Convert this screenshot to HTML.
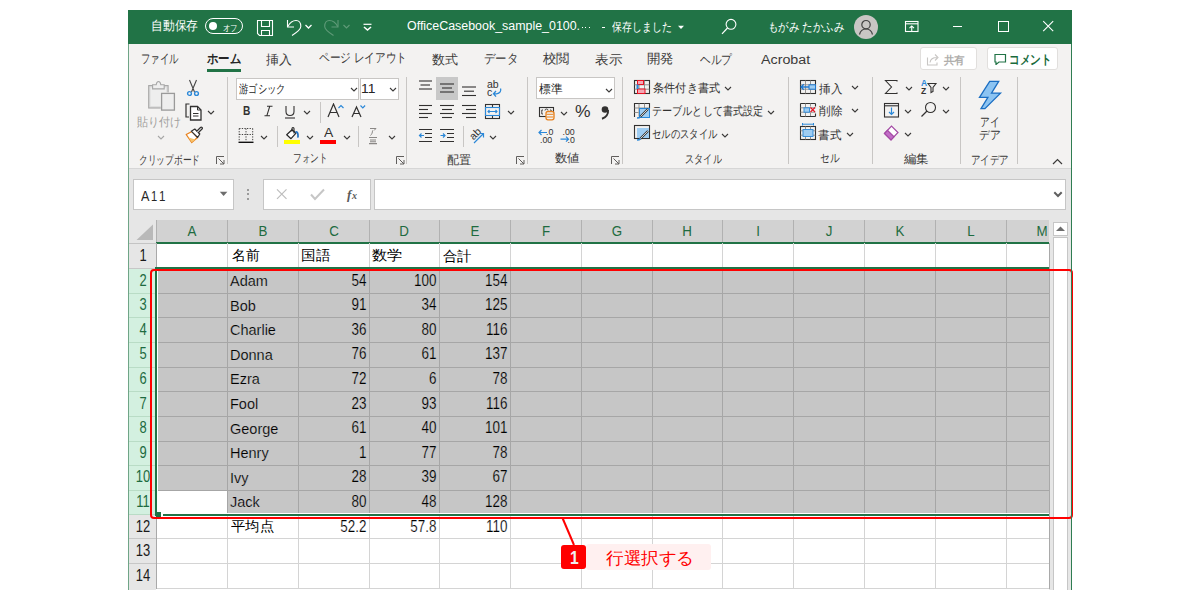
<!DOCTYPE html><html><head><meta charset="utf-8"><style>
html,body{margin:0;padding:0;background:#fff;width:1200px;height:600px;overflow:hidden;}
body{font-family:"Liberation Sans", sans-serif;position:relative;}
div,svg{box-sizing:border-box;}
</style></head><body>
<div style="position:absolute;left:128px;top:10px;width:944px;height:34px;background:#217346;"></div>
<div style="position:absolute;left:128px;top:44px;width:944px;height:124px;background:#f3f2f1;"></div>
<div style="position:absolute;left:128px;top:168px;width:944px;height:1px;background:#d6d6d6;"></div>
<div style="position:absolute;left:128px;top:169px;width:944px;height:51px;background:#e6e6e6;"></div>
<div style="position:absolute;left:128px;top:220px;width:944px;height:370px;background:#fff;"></div>
<div style="position:absolute;left:156px;top:220px;width:893px;height:22px;background:#d2d2d2;"></div>
<div style="position:absolute;left:129px;top:220px;width:27px;height:23px;background:#e6e6e6;"></div>
<svg style="position:absolute;left:136px;top:224px;" width="18" height="16" viewBox="0 0 18 16"><path d="M17 0.5V16H0.5z" fill="#b9b9b9"/></svg>
<div style="position:absolute;left:156px;top:220px;width:1px;height:22px;background:#b1b1b1;"></div>
<div style="position:absolute;left:227px;top:220px;width:1px;height:22px;background:#b1b1b1;"></div>
<div style="position:absolute;left:298px;top:220px;width:1px;height:22px;background:#b1b1b1;"></div>
<div style="position:absolute;left:369px;top:220px;width:1px;height:22px;background:#b1b1b1;"></div>
<div style="position:absolute;left:439px;top:220px;width:1px;height:22px;background:#b1b1b1;"></div>
<div style="position:absolute;left:510px;top:220px;width:1px;height:22px;background:#b1b1b1;"></div>
<div style="position:absolute;left:581px;top:220px;width:1px;height:22px;background:#b1b1b1;"></div>
<div style="position:absolute;left:652px;top:220px;width:1px;height:22px;background:#b1b1b1;"></div>
<div style="position:absolute;left:722px;top:220px;width:1px;height:22px;background:#b1b1b1;"></div>
<div style="position:absolute;left:793px;top:220px;width:1px;height:22px;background:#b1b1b1;"></div>
<div style="position:absolute;left:864px;top:220px;width:1px;height:22px;background:#b1b1b1;"></div>
<div style="position:absolute;left:935px;top:220px;width:1px;height:22px;background:#b1b1b1;"></div>
<div style="position:absolute;left:1006px;top:220px;width:1px;height:22px;background:#b1b1b1;"></div>
<div style="position:absolute;left:161.5px;top:223.08px;width:60px;text-align:center;font-size:15.5px;line-height:1;color:#1e6b40;transform:scaleX(0.86);">A</div>
<div style="position:absolute;left:232.5px;top:223.08px;width:60px;text-align:center;font-size:15.5px;line-height:1;color:#1e6b40;transform:scaleX(0.86);">B</div>
<div style="position:absolute;left:303.5px;top:223.08px;width:60px;text-align:center;font-size:15.5px;line-height:1;color:#1e6b40;transform:scaleX(0.86);">C</div>
<div style="position:absolute;left:374.0px;top:223.08px;width:60px;text-align:center;font-size:15.5px;line-height:1;color:#1e6b40;transform:scaleX(0.86);">D</div>
<div style="position:absolute;left:444.5px;top:223.08px;width:60px;text-align:center;font-size:15.5px;line-height:1;color:#1e6b40;transform:scaleX(0.86);">E</div>
<div style="position:absolute;left:515.5px;top:223.08px;width:60px;text-align:center;font-size:15.5px;line-height:1;color:#1e6b40;transform:scaleX(0.86);">F</div>
<div style="position:absolute;left:586.5px;top:223.08px;width:60px;text-align:center;font-size:15.5px;line-height:1;color:#1e6b40;transform:scaleX(0.86);">G</div>
<div style="position:absolute;left:657.0px;top:223.08px;width:60px;text-align:center;font-size:15.5px;line-height:1;color:#1e6b40;transform:scaleX(0.86);">H</div>
<div style="position:absolute;left:727.5px;top:223.08px;width:60px;text-align:center;font-size:15.5px;line-height:1;color:#1e6b40;transform:scaleX(0.86);">I</div>
<div style="position:absolute;left:798.5px;top:223.08px;width:60px;text-align:center;font-size:15.5px;line-height:1;color:#1e6b40;transform:scaleX(0.86);">J</div>
<div style="position:absolute;left:869.5px;top:223.08px;width:60px;text-align:center;font-size:15.5px;line-height:1;color:#1e6b40;transform:scaleX(0.86);">K</div>
<div style="position:absolute;left:940.5px;top:223.08px;width:60px;text-align:center;font-size:15.5px;line-height:1;color:#1e6b40;transform:scaleX(0.86);">L</div>
<div style="position:absolute;left:1012px;top:223.08px;width:60px;text-align:center;font-size:15.5px;line-height:1;color:#1e6b40;transform:scaleX(0.86);">M</div>
<div style="position:absolute;left:156px;top:242px;width:893px;height:2px;background:#217346;"></div>
<div style="position:absolute;left:129px;top:243px;width:27px;height:26px;background:#e6e6e6;"></div>
<div style="position:absolute;left:129px;top:268px;width:27px;height:1px;background:#c7c7c7;"></div>
<div style="position:absolute;left:112.5px;top:248.06px;width:60px;text-align:center;font-size:16px;line-height:1;color:#1a1a1a;transform:scaleX(0.81);">1</div>
<div style="position:absolute;left:129px;top:269px;width:27px;height:25px;background:#d3f0e0;"></div>
<div style="position:absolute;left:129px;top:293px;width:27px;height:1px;background:#b9dcc6;"></div>
<div style="position:absolute;left:112.5px;top:272.66px;width:60px;text-align:center;font-size:16px;line-height:1;color:#1e6b40;transform:scaleX(0.81);">2</div>
<div style="position:absolute;left:129px;top:294px;width:27px;height:24px;background:#d3f0e0;"></div>
<div style="position:absolute;left:129px;top:317px;width:27px;height:1px;background:#b9dcc6;"></div>
<div style="position:absolute;left:112.5px;top:297.26px;width:60px;text-align:center;font-size:16px;line-height:1;color:#1e6b40;transform:scaleX(0.81);">3</div>
<div style="position:absolute;left:129px;top:318px;width:27px;height:25px;background:#d3f0e0;"></div>
<div style="position:absolute;left:129px;top:342px;width:27px;height:1px;background:#b9dcc6;"></div>
<div style="position:absolute;left:112.5px;top:321.86px;width:60px;text-align:center;font-size:16px;line-height:1;color:#1e6b40;transform:scaleX(0.81);">4</div>
<div style="position:absolute;left:129px;top:343px;width:27px;height:25px;background:#d3f0e0;"></div>
<div style="position:absolute;left:129px;top:367px;width:27px;height:1px;background:#b9dcc6;"></div>
<div style="position:absolute;left:112.5px;top:346.46px;width:60px;text-align:center;font-size:16px;line-height:1;color:#1e6b40;transform:scaleX(0.81);">5</div>
<div style="position:absolute;left:129px;top:368px;width:27px;height:24px;background:#d3f0e0;"></div>
<div style="position:absolute;left:129px;top:391px;width:27px;height:1px;background:#b9dcc6;"></div>
<div style="position:absolute;left:112.5px;top:371.06px;width:60px;text-align:center;font-size:16px;line-height:1;color:#1e6b40;transform:scaleX(0.81);">6</div>
<div style="position:absolute;left:129px;top:392px;width:27px;height:25px;background:#d3f0e0;"></div>
<div style="position:absolute;left:129px;top:416px;width:27px;height:1px;background:#b9dcc6;"></div>
<div style="position:absolute;left:112.5px;top:395.66px;width:60px;text-align:center;font-size:16px;line-height:1;color:#1e6b40;transform:scaleX(0.81);">7</div>
<div style="position:absolute;left:129px;top:417px;width:27px;height:25px;background:#d3f0e0;"></div>
<div style="position:absolute;left:129px;top:441px;width:27px;height:1px;background:#b9dcc6;"></div>
<div style="position:absolute;left:112.5px;top:420.26px;width:60px;text-align:center;font-size:16px;line-height:1;color:#1e6b40;transform:scaleX(0.81);">8</div>
<div style="position:absolute;left:129px;top:442px;width:27px;height:24px;background:#d3f0e0;"></div>
<div style="position:absolute;left:129px;top:465px;width:27px;height:1px;background:#b9dcc6;"></div>
<div style="position:absolute;left:112.5px;top:444.86px;width:60px;text-align:center;font-size:16px;line-height:1;color:#1e6b40;transform:scaleX(0.81);">9</div>
<div style="position:absolute;left:129px;top:466px;width:27px;height:25px;background:#d3f0e0;"></div>
<div style="position:absolute;left:129px;top:490px;width:27px;height:1px;background:#b9dcc6;"></div>
<div style="position:absolute;left:112.5px;top:469.46px;width:60px;text-align:center;font-size:16px;line-height:1;color:#1e6b40;transform:scaleX(0.81);">10</div>
<div style="position:absolute;left:129px;top:491px;width:27px;height:24px;background:#d3f0e0;"></div>
<div style="position:absolute;left:129px;top:514px;width:27px;height:1px;background:#b9dcc6;"></div>
<div style="position:absolute;left:112.5px;top:494.06px;width:60px;text-align:center;font-size:16px;line-height:1;color:#1e6b40;transform:scaleX(0.81);">11</div>
<div style="position:absolute;left:129px;top:515px;width:27px;height:24px;background:#e6e6e6;"></div>
<div style="position:absolute;left:129px;top:538px;width:27px;height:1px;background:#c7c7c7;"></div>
<div style="position:absolute;left:112.5px;top:518.66px;width:60px;text-align:center;font-size:16px;line-height:1;color:#1a1a1a;transform:scaleX(0.81);">12</div>
<div style="position:absolute;left:129px;top:539px;width:27px;height:25px;background:#e6e6e6;"></div>
<div style="position:absolute;left:129px;top:563px;width:27px;height:1px;background:#c7c7c7;"></div>
<div style="position:absolute;left:112.5px;top:543.26px;width:60px;text-align:center;font-size:16px;line-height:1;color:#1a1a1a;transform:scaleX(0.81);">13</div>
<div style="position:absolute;left:129px;top:564px;width:27px;height:26px;background:#e6e6e6;"></div>
<div style="position:absolute;left:112.5px;top:567.86px;width:60px;text-align:center;font-size:16px;line-height:1;color:#1a1a1a;transform:scaleX(0.81);">14</div>
<div style="position:absolute;left:156px;top:243px;width:1px;height:346px;background:#a9a9a9;"></div>
<div style="position:absolute;left:129px;top:243px;width:27px;height:1px;background:#c4c4c4;"></div>
<div style="position:absolute;left:157px;top:269px;width:892px;height:245px;background:#c6c6c6;"></div>
<div style="position:absolute;left:158px;top:491px;width:69px;height:23px;background:#fff;"></div>
<div style="position:absolute;left:157px;top:538px;width:892px;height:1px;background:#d4d4d4;"></div>
<div style="position:absolute;left:157px;top:563px;width:892px;height:1px;background:#d4d4d4;"></div>
<div style="position:absolute;left:157px;top:588px;width:892px;height:1px;background:#d4d4d4;"></div>
<div style="position:absolute;left:227px;top:243px;width:1px;height:25px;background:#d4d4d4;"></div>
<div style="position:absolute;left:227px;top:515px;width:1px;height:74px;background:#d4d4d4;"></div>
<div style="position:absolute;left:298px;top:243px;width:1px;height:25px;background:#d4d4d4;"></div>
<div style="position:absolute;left:298px;top:515px;width:1px;height:74px;background:#d4d4d4;"></div>
<div style="position:absolute;left:369px;top:243px;width:1px;height:25px;background:#d4d4d4;"></div>
<div style="position:absolute;left:369px;top:515px;width:1px;height:74px;background:#d4d4d4;"></div>
<div style="position:absolute;left:439px;top:243px;width:1px;height:25px;background:#d4d4d4;"></div>
<div style="position:absolute;left:439px;top:515px;width:1px;height:74px;background:#d4d4d4;"></div>
<div style="position:absolute;left:510px;top:243px;width:1px;height:25px;background:#d4d4d4;"></div>
<div style="position:absolute;left:510px;top:515px;width:1px;height:74px;background:#d4d4d4;"></div>
<div style="position:absolute;left:581px;top:243px;width:1px;height:25px;background:#d4d4d4;"></div>
<div style="position:absolute;left:581px;top:515px;width:1px;height:74px;background:#d4d4d4;"></div>
<div style="position:absolute;left:652px;top:243px;width:1px;height:25px;background:#d4d4d4;"></div>
<div style="position:absolute;left:652px;top:515px;width:1px;height:74px;background:#d4d4d4;"></div>
<div style="position:absolute;left:722px;top:243px;width:1px;height:25px;background:#d4d4d4;"></div>
<div style="position:absolute;left:722px;top:515px;width:1px;height:74px;background:#d4d4d4;"></div>
<div style="position:absolute;left:793px;top:243px;width:1px;height:25px;background:#d4d4d4;"></div>
<div style="position:absolute;left:793px;top:515px;width:1px;height:74px;background:#d4d4d4;"></div>
<div style="position:absolute;left:864px;top:243px;width:1px;height:25px;background:#d4d4d4;"></div>
<div style="position:absolute;left:864px;top:515px;width:1px;height:74px;background:#d4d4d4;"></div>
<div style="position:absolute;left:935px;top:243px;width:1px;height:25px;background:#d4d4d4;"></div>
<div style="position:absolute;left:935px;top:515px;width:1px;height:74px;background:#d4d4d4;"></div>
<div style="position:absolute;left:1006px;top:243px;width:1px;height:25px;background:#d4d4d4;"></div>
<div style="position:absolute;left:1006px;top:515px;width:1px;height:74px;background:#d4d4d4;"></div>
<div style="position:absolute;left:157px;top:293px;width:892px;height:1px;background:#a6a6a6;"></div>
<div style="position:absolute;left:157px;top:317px;width:892px;height:1px;background:#a6a6a6;"></div>
<div style="position:absolute;left:157px;top:342px;width:892px;height:1px;background:#a6a6a6;"></div>
<div style="position:absolute;left:157px;top:367px;width:892px;height:1px;background:#a6a6a6;"></div>
<div style="position:absolute;left:157px;top:391px;width:892px;height:1px;background:#a6a6a6;"></div>
<div style="position:absolute;left:157px;top:416px;width:892px;height:1px;background:#a6a6a6;"></div>
<div style="position:absolute;left:157px;top:441px;width:892px;height:1px;background:#a6a6a6;"></div>
<div style="position:absolute;left:157px;top:465px;width:892px;height:1px;background:#a6a6a6;"></div>
<div style="position:absolute;left:157px;top:490px;width:892px;height:1px;background:#a6a6a6;"></div>
<div style="position:absolute;left:227px;top:269px;width:1px;height:245px;background:#a6a6a6;"></div>
<div style="position:absolute;left:298px;top:269px;width:1px;height:245px;background:#a6a6a6;"></div>
<div style="position:absolute;left:369px;top:269px;width:1px;height:245px;background:#a6a6a6;"></div>
<div style="position:absolute;left:439px;top:269px;width:1px;height:245px;background:#a6a6a6;"></div>
<div style="position:absolute;left:510px;top:269px;width:1px;height:245px;background:#a6a6a6;"></div>
<div style="position:absolute;left:581px;top:269px;width:1px;height:245px;background:#a6a6a6;"></div>
<div style="position:absolute;left:652px;top:269px;width:1px;height:245px;background:#a6a6a6;"></div>
<div style="position:absolute;left:722px;top:269px;width:1px;height:245px;background:#a6a6a6;"></div>
<div style="position:absolute;left:793px;top:269px;width:1px;height:245px;background:#a6a6a6;"></div>
<div style="position:absolute;left:864px;top:269px;width:1px;height:245px;background:#a6a6a6;"></div>
<div style="position:absolute;left:935px;top:269px;width:1px;height:245px;background:#a6a6a6;"></div>
<div style="position:absolute;left:1006px;top:269px;width:1px;height:245px;background:#a6a6a6;"></div>
<div style="position:absolute;left:155px;top:267px;width:894px;height:2px;background:#217346;"></div>
<div style="position:absolute;left:155px;top:267px;width:2px;height:249px;background:#217346;"></div>
<div style="position:absolute;left:155px;top:514px;width:894px;height:2px;background:#217346;"></div>
<div style="position:absolute;left:157px;top:269px;width:892px;height:1px;background:#fff;"></div>
<div style="position:absolute;left:157px;top:269px;width:1px;height:245px;background:#fff;"></div>
<div style="position:absolute;left:157px;top:513px;width:892px;height:1px;background:#fff;"></div>
<div style="position:absolute;left:161px;top:512px;width:1.5px;height:5px;background:#fff;"></div>
<div style="position:absolute;left:156px;top:512px;width:5px;height:5px;background:#217346;"></div>
<div style="position:absolute;left:232.00px;top:248.20px;font-size:14.00px;line-height:1;color:#000;white-space:nowrap;transform-origin:0 0;transform:scaleX(0.9907);font-weight:500;">名前</div>
<div style="position:absolute;left:301.46px;top:248.20px;font-size:14.00px;line-height:1;color:#000;white-space:nowrap;transform-origin:0 0;transform:scaleX(1.0385);font-weight:500;">国語</div>
<div style="position:absolute;left:371.91px;top:248.20px;font-size:14.00px;line-height:1;color:#000;white-space:nowrap;transform-origin:0 0;transform:scaleX(1.0865);font-weight:500;">数学</div>
<div style="position:absolute;left:442.73px;top:249.20px;font-size:14.00px;line-height:1;color:#000;white-space:nowrap;transform-origin:0 0;transform:scaleX(1.0185);font-weight:500;">合計</div>
<div style="position:absolute;left:230px;top:273.93px;font-size:14.5px;line-height:1;color:#000;-webkit-text-stroke:0.2px #c6c6c6;">Adam</div>
<div style="position:absolute;left:198px;top:272.66px;width:168.5px;text-align:right;font-size:16px;line-height:1;color:#000;transform-origin:100% 0;transform:scaleX(0.84);-webkit-text-stroke:0.2px #c6c6c6;">54</div>
<div style="position:absolute;left:269px;top:272.66px;width:167.5px;text-align:right;font-size:16px;line-height:1;color:#000;transform-origin:100% 0;transform:scaleX(0.84);-webkit-text-stroke:0.2px #c6c6c6;">100</div>
<div style="position:absolute;left:339px;top:272.66px;width:168.5px;text-align:right;font-size:16px;line-height:1;color:#000;transform-origin:100% 0;transform:scaleX(0.84);-webkit-text-stroke:0.2px #c6c6c6;">154</div>
<div style="position:absolute;left:230px;top:298.53px;font-size:14.5px;line-height:1;color:#000;-webkit-text-stroke:0.2px #c6c6c6;">Bob</div>
<div style="position:absolute;left:198px;top:297.26px;width:168.5px;text-align:right;font-size:16px;line-height:1;color:#000;transform-origin:100% 0;transform:scaleX(0.84);-webkit-text-stroke:0.2px #c6c6c6;">91</div>
<div style="position:absolute;left:269px;top:297.26px;width:167.5px;text-align:right;font-size:16px;line-height:1;color:#000;transform-origin:100% 0;transform:scaleX(0.84);-webkit-text-stroke:0.2px #c6c6c6;">34</div>
<div style="position:absolute;left:339px;top:297.26px;width:168.5px;text-align:right;font-size:16px;line-height:1;color:#000;transform-origin:100% 0;transform:scaleX(0.84);-webkit-text-stroke:0.2px #c6c6c6;">125</div>
<div style="position:absolute;left:230px;top:323.13px;font-size:14.5px;line-height:1;color:#000;-webkit-text-stroke:0.2px #c6c6c6;">Charlie</div>
<div style="position:absolute;left:198px;top:321.86px;width:168.5px;text-align:right;font-size:16px;line-height:1;color:#000;transform-origin:100% 0;transform:scaleX(0.84);-webkit-text-stroke:0.2px #c6c6c6;">36</div>
<div style="position:absolute;left:269px;top:321.86px;width:167.5px;text-align:right;font-size:16px;line-height:1;color:#000;transform-origin:100% 0;transform:scaleX(0.84);-webkit-text-stroke:0.2px #c6c6c6;">80</div>
<div style="position:absolute;left:339px;top:321.86px;width:168.5px;text-align:right;font-size:16px;line-height:1;color:#000;transform-origin:100% 0;transform:scaleX(0.84);-webkit-text-stroke:0.2px #c6c6c6;">116</div>
<div style="position:absolute;left:230px;top:347.73px;font-size:14.5px;line-height:1;color:#000;-webkit-text-stroke:0.2px #c6c6c6;">Donna</div>
<div style="position:absolute;left:198px;top:346.46px;width:168.5px;text-align:right;font-size:16px;line-height:1;color:#000;transform-origin:100% 0;transform:scaleX(0.84);-webkit-text-stroke:0.2px #c6c6c6;">76</div>
<div style="position:absolute;left:269px;top:346.46px;width:167.5px;text-align:right;font-size:16px;line-height:1;color:#000;transform-origin:100% 0;transform:scaleX(0.84);-webkit-text-stroke:0.2px #c6c6c6;">61</div>
<div style="position:absolute;left:339px;top:346.46px;width:168.5px;text-align:right;font-size:16px;line-height:1;color:#000;transform-origin:100% 0;transform:scaleX(0.84);-webkit-text-stroke:0.2px #c6c6c6;">137</div>
<div style="position:absolute;left:230px;top:372.33px;font-size:14.5px;line-height:1;color:#000;-webkit-text-stroke:0.2px #c6c6c6;">Ezra</div>
<div style="position:absolute;left:198px;top:371.06px;width:168.5px;text-align:right;font-size:16px;line-height:1;color:#000;transform-origin:100% 0;transform:scaleX(0.84);-webkit-text-stroke:0.2px #c6c6c6;">72</div>
<div style="position:absolute;left:269px;top:371.06px;width:167.5px;text-align:right;font-size:16px;line-height:1;color:#000;transform-origin:100% 0;transform:scaleX(0.84);-webkit-text-stroke:0.2px #c6c6c6;">6</div>
<div style="position:absolute;left:339px;top:371.06px;width:168.5px;text-align:right;font-size:16px;line-height:1;color:#000;transform-origin:100% 0;transform:scaleX(0.84);-webkit-text-stroke:0.2px #c6c6c6;">78</div>
<div style="position:absolute;left:230px;top:396.93px;font-size:14.5px;line-height:1;color:#000;-webkit-text-stroke:0.2px #c6c6c6;">Fool</div>
<div style="position:absolute;left:198px;top:395.66px;width:168.5px;text-align:right;font-size:16px;line-height:1;color:#000;transform-origin:100% 0;transform:scaleX(0.84);-webkit-text-stroke:0.2px #c6c6c6;">23</div>
<div style="position:absolute;left:269px;top:395.66px;width:167.5px;text-align:right;font-size:16px;line-height:1;color:#000;transform-origin:100% 0;transform:scaleX(0.84);-webkit-text-stroke:0.2px #c6c6c6;">93</div>
<div style="position:absolute;left:339px;top:395.66px;width:168.5px;text-align:right;font-size:16px;line-height:1;color:#000;transform-origin:100% 0;transform:scaleX(0.84);-webkit-text-stroke:0.2px #c6c6c6;">116</div>
<div style="position:absolute;left:230px;top:421.53px;font-size:14.5px;line-height:1;color:#000;-webkit-text-stroke:0.2px #c6c6c6;">George</div>
<div style="position:absolute;left:198px;top:420.26px;width:168.5px;text-align:right;font-size:16px;line-height:1;color:#000;transform-origin:100% 0;transform:scaleX(0.84);-webkit-text-stroke:0.2px #c6c6c6;">61</div>
<div style="position:absolute;left:269px;top:420.26px;width:167.5px;text-align:right;font-size:16px;line-height:1;color:#000;transform-origin:100% 0;transform:scaleX(0.84);-webkit-text-stroke:0.2px #c6c6c6;">40</div>
<div style="position:absolute;left:339px;top:420.26px;width:168.5px;text-align:right;font-size:16px;line-height:1;color:#000;transform-origin:100% 0;transform:scaleX(0.84);-webkit-text-stroke:0.2px #c6c6c6;">101</div>
<div style="position:absolute;left:230px;top:446.13px;font-size:14.5px;line-height:1;color:#000;-webkit-text-stroke:0.2px #c6c6c6;">Henry</div>
<div style="position:absolute;left:198px;top:444.86px;width:168.5px;text-align:right;font-size:16px;line-height:1;color:#000;transform-origin:100% 0;transform:scaleX(0.84);-webkit-text-stroke:0.2px #c6c6c6;">1</div>
<div style="position:absolute;left:269px;top:444.86px;width:167.5px;text-align:right;font-size:16px;line-height:1;color:#000;transform-origin:100% 0;transform:scaleX(0.84);-webkit-text-stroke:0.2px #c6c6c6;">77</div>
<div style="position:absolute;left:339px;top:444.86px;width:168.5px;text-align:right;font-size:16px;line-height:1;color:#000;transform-origin:100% 0;transform:scaleX(0.84);-webkit-text-stroke:0.2px #c6c6c6;">78</div>
<div style="position:absolute;left:230px;top:470.73px;font-size:14.5px;line-height:1;color:#000;-webkit-text-stroke:0.2px #c6c6c6;">Ivy</div>
<div style="position:absolute;left:198px;top:469.46px;width:168.5px;text-align:right;font-size:16px;line-height:1;color:#000;transform-origin:100% 0;transform:scaleX(0.84);-webkit-text-stroke:0.2px #c6c6c6;">28</div>
<div style="position:absolute;left:269px;top:469.46px;width:167.5px;text-align:right;font-size:16px;line-height:1;color:#000;transform-origin:100% 0;transform:scaleX(0.84);-webkit-text-stroke:0.2px #c6c6c6;">39</div>
<div style="position:absolute;left:339px;top:469.46px;width:168.5px;text-align:right;font-size:16px;line-height:1;color:#000;transform-origin:100% 0;transform:scaleX(0.84);-webkit-text-stroke:0.2px #c6c6c6;">67</div>
<div style="position:absolute;left:230px;top:495.33px;font-size:14.5px;line-height:1;color:#000;-webkit-text-stroke:0.2px #c6c6c6;">Jack</div>
<div style="position:absolute;left:198px;top:494.06px;width:168.5px;text-align:right;font-size:16px;line-height:1;color:#000;transform-origin:100% 0;transform:scaleX(0.84);-webkit-text-stroke:0.2px #c6c6c6;">80</div>
<div style="position:absolute;left:269px;top:494.06px;width:167.5px;text-align:right;font-size:16px;line-height:1;color:#000;transform-origin:100% 0;transform:scaleX(0.84);-webkit-text-stroke:0.2px #c6c6c6;">48</div>
<div style="position:absolute;left:339px;top:494.06px;width:168.5px;text-align:right;font-size:16px;line-height:1;color:#000;transform-origin:100% 0;transform:scaleX(0.84);-webkit-text-stroke:0.2px #c6c6c6;">128</div>
<div style="position:absolute;left:230.50px;top:518.50px;font-size:14.00px;line-height:1;color:#000;white-space:nowrap;transform-origin:0 0;transform:scaleX(1.0244);font-weight:500;">平均点</div>
<div style="position:absolute;left:198px;top:518.66px;width:168.5px;text-align:right;font-size:16px;line-height:1;color:#000;transform-origin:100% 0;transform:scaleX(0.84);-webkit-text-stroke:0.2px #ffffff;">52.2</div>
<div style="position:absolute;left:269px;top:518.66px;width:167.5px;text-align:right;font-size:16px;line-height:1;color:#000;transform-origin:100% 0;transform:scaleX(0.84);-webkit-text-stroke:0.2px #ffffff;">57.8</div>
<div style="position:absolute;left:339px;top:518.66px;width:168.5px;text-align:right;font-size:16px;line-height:1;color:#000;transform-origin:100% 0;transform:scaleX(0.84);-webkit-text-stroke:0.2px #ffffff;">110</div>
<div style="position:absolute;left:1049px;top:220px;width:22px;height:370px;background:#e6e6e6;"></div>
<div style="position:absolute;left:1049px;top:243px;width:1px;height:346px;background:#a9a9a9;"></div>
<div style="position:absolute;left:1053px;top:222px;width:15px;height:14px;background:#fff;border:1px solid #c6c6c6;"></div>
<svg style="position:absolute;left:1056px;top:226px;" width="9" height="5" viewBox="0 0 9 5"><path d="M0 5L4.5 0.5L9 5z" fill="#6d6d6d"/></svg>
<div style="position:absolute;left:1053px;top:237px;width:15px;height:353px;background:#fff;border:1px solid #c6c6c6;border-bottom:none;"></div>
<div style="position:absolute;left:150px;top:269px;width:923px;height:250px;border:2px solid #ff0000;border-radius:4px;"></div>
<svg style="position:absolute;left:556px;top:514px;" width="24" height="34" viewBox="0 0 24 34"><path d="M6.5 4L18 31" stroke="#ff0000" stroke-width="2"/></svg>
<div style="position:absolute;left:586px;top:543.5px;width:125px;height:26.5px;background:#fff0f0;border-radius:3px;"></div>
<div style="position:absolute;left:561px;top:545px;width:25px;height:24px;background:#ff0000;border-radius:3px;"></div>
<div style="position:absolute;left:569.63px;top:549.00px;font-size:18.00px;line-height:1;color:#f0f0f0;white-space:nowrap;transform-origin:0 0;transform:scaleX(0.8667);font-weight:bold;">1</div>
<div style="position:absolute;left:606.20px;top:549.50px;font-size:17.00px;line-height:1;color:#ff0000;white-space:nowrap;transform-origin:0 0;transform:scaleX(1.0349);">行選択する</div>
<div style="position:absolute;left:150.89px;top:18.90px;font-size:13.00px;line-height:1;color:#ffffff;white-space:nowrap;transform-origin:0 0;transform:scaleX(0.9041);">自動保存</div>
<div style="position:absolute;left:204.8px;top:18px;width:38.2px;height:15.8px;border:1.2px solid #fff;border-radius:8px;"></div>
<div style="position:absolute;left:209.2px;top:22.3px;width:7.8px;height:7.8px;background:#fff;border-radius:50%;"></div>
<div style="position:absolute;left:222.92px;top:23.50px;font-size:9.00px;line-height:1;color:#ffffff;white-space:nowrap;transform-origin:0 0;transform:scaleX(0.8281);">オフ</div>
<svg style="position:absolute;left:256px;top:19px;" width="18" height="18" viewBox="0 0 18 18"><path d="M1.5 1.5H16.5V16.5H3.5L1.5 14.5Z" fill="none" stroke="#fff" stroke-width="1.1"/><path d="M5.5 1.5V7.5H13.5V1.5M5.5 16.5V11.5H13.5V16.5" fill="none" stroke="#fff" stroke-width="1.1"/></svg>
<svg style="position:absolute;left:284px;top:18px;" width="20" height="20" viewBox="0 0 20 20"><path d="M3.5 2v7h6.5" fill="none" stroke="#fff" stroke-width="1.1"/><path d="M3.8 8.6 C6 4.5 9 2.5 12 2.5 C15 2.5 16.8 5 16.8 8.5 C16.8 11 15 13 8 17.5" fill="none" stroke="#fff" stroke-width="1.1"/></svg>
<svg style="position:absolute;left:304px;top:23px;" width="9" height="7" viewBox="0 0 9 7"><path d="M1.5 2l3 3l3-3" fill="none" stroke="#fff" stroke-width="1.3"/></svg>
<svg style="position:absolute;left:322px;top:18px;" width="20" height="20" viewBox="0 0 20 20"><path d="M16 2v7h-6.5" fill="none" stroke="#5f9a78" stroke-width="1.1"/><path d="M15.7 8.6 C13.5 4.5 10.5 2.5 7.5 2.5 C4.5 2.5 2.7 5 2.7 8.5 C2.7 11 4.5 13 11.5 17.5" fill="none" stroke="#5f9a78" stroke-width="1.1"/></svg>
<svg style="position:absolute;left:342px;top:23px;" width="9" height="7" viewBox="0 0 9 7"><path d="M1.5 2l3 3l3-3" fill="none" stroke="#5f9a78" stroke-width="1.2"/></svg>
<svg style="position:absolute;left:362px;top:22px;" width="11" height="10" viewBox="0 0 11 10"><path d="M1.5 2.3h8" stroke="#fff" stroke-width="1.2"/><path d="M2 5l3.5 3l3.5-3" fill="none" stroke="#fff" stroke-width="1.6"/></svg>
<div style="position:absolute;left:406.70px;top:20.30px;font-size:12.00px;line-height:1;color:#ffffff;white-space:nowrap;transform-origin:0 0;transform:scaleX(1.0349);">OfficeCasebook_sample_0100.</div>
<div style="position:absolute;left:581.5px;top:26.5px;width:1.3px;height:1.3px;background:#fff;"></div>
<div style="position:absolute;left:585.1px;top:26.5px;width:1.3px;height:1.3px;background:#fff;"></div>
<div style="position:absolute;left:588.7px;top:26.5px;width:1.3px;height:1.3px;background:#fff;"></div>
<div style="position:absolute;left:602px;top:27px;width:3px;height:1.2px;background:#fff;"></div>
<div style="position:absolute;left:612.30px;top:21.30px;font-size:12.00px;line-height:1;color:#ffffff;white-space:nowrap;transform-origin:0 0;transform:scaleX(0.8254);">保存しました</div>
<svg style="position:absolute;left:677px;top:25px;" width="8" height="5" viewBox="0 0 8 5"><path d="M1 0.8h6l-3 3.2z" fill="#fff"/></svg>
<svg style="position:absolute;left:720px;top:18px;" width="18" height="18" viewBox="0 0 18 18"><circle cx="11" cy="6.3" r="4.9" fill="none" stroke="#fff" stroke-width="1.1"/><path d="M7.5 10l-5.5 5.8" stroke="#fff" stroke-width="1.2"/></svg>
<div style="position:absolute;left:768.19px;top:21.30px;font-size:12.00px;line-height:1;color:#ffffff;white-space:nowrap;transform-origin:0 0;transform:scaleX(0.8711);">もがみ たかふみ</div>
<div style="position:absolute;left:854px;top:15px;width:24px;height:24px;background:#c8c6c4;border-radius:50%;"></div>
<svg style="position:absolute;left:854px;top:15px;" width="24" height="24" viewBox="0 0 24 24"><circle cx="12" cy="9.7" r="4.2" fill="none" stroke="#424242" stroke-width="1.2"/><path d="M5.5 19.5 C6.5 15.5 9 14 12 14 C15 14 17.5 15.5 18.5 19.5" fill="none" stroke="#424242" stroke-width="1.2"/></svg>
<svg style="position:absolute;left:904px;top:20px;" width="16" height="13" viewBox="0 0 16 13"><rect x="1.5" y="1.5" width="12.5" height="10" fill="none" stroke="#fff" stroke-width="1.1"/><path d="M1.5 3.8h12.5" stroke="#fff" stroke-width="1.1"/><path d="M7.75 11.5v-5.5M5.5 8.2l2.25-2.25l2.25 2.25" fill="none" stroke="#fff" stroke-width="1.1"/></svg>
<div style="position:absolute;left:953px;top:26.3px;width:9.3px;height:1.1px;background:#fff;"></div>
<div style="position:absolute;left:998px;top:21px;width:10.5px;height:10.5px;border:1.1px solid #fff;"></div>
<svg style="position:absolute;left:1042px;top:20px;" width="12" height="12" viewBox="0 0 12 12"><path d="M1.2 1.2l10 10M11.2 1.2l-10 10" stroke="#fff" stroke-width="1.1"/></svg>
<div style="position:absolute;left:141.14px;top:52.50px;font-size:12.50px;line-height:1;color:#3b3a39;white-space:nowrap;transform-origin:0 0;transform:scaleX(0.7280);">ファイル</div>
<div style="position:absolute;left:266.40px;top:54.00px;font-size:12.50px;line-height:1;color:#3b3a39;white-space:nowrap;transform-origin:0 0;transform:scaleX(0.9880);">挿入</div>
<div style="position:absolute;left:319.28px;top:52.30px;font-size:12.50px;line-height:1;color:#3b3a39;white-space:nowrap;transform-origin:0 0;transform:scaleX(0.8194);">ページ レイアウト</div>
<div style="position:absolute;left:432.30px;top:54.30px;font-size:12.50px;line-height:1;color:#3b3a39;white-space:nowrap;transform-origin:0 0;transform:scaleX(1.0000);">数式</div>
<div style="position:absolute;left:483.82px;top:53.30px;font-size:12.50px;line-height:1;color:#3b3a39;white-space:nowrap;transform-origin:0 0;transform:scaleX(0.8806);">データ</div>
<div style="position:absolute;left:543.00px;top:53.30px;font-size:12.50px;line-height:1;color:#3b3a39;white-space:nowrap;transform-origin:0 0;transform:scaleX(1.0300);">校閲</div>
<div style="position:absolute;left:594.71px;top:54.30px;font-size:12.50px;line-height:1;color:#3b3a39;white-space:nowrap;transform-origin:0 0;transform:scaleX(1.0417);">表示</div>
<div style="position:absolute;left:647.22px;top:53.30px;font-size:12.50px;line-height:1;color:#3b3a39;white-space:nowrap;transform-origin:0 0;transform:scaleX(1.0312);">開発</div>
<div style="position:absolute;left:699.60px;top:54.30px;font-size:12.50px;line-height:1;color:#3b3a39;white-space:nowrap;transform-origin:0 0;transform:scaleX(0.8231);">ヘルプ</div>
<div style="position:absolute;left:206.80px;top:53.00px;font-size:12.50px;line-height:1;color:#262626;white-space:nowrap;transform-origin:0 0;transform:scaleX(0.8789);font-weight:bold;">ホーム</div>
<div style="position:absolute;left:761.20px;top:54.20px;font-size:12.50px;line-height:1;color:#3b3a39;white-space:nowrap;transform-origin:0 0;transform:scaleX(1.1419);">Acrobat</div>
<div style="position:absolute;left:206.8px;top:68.7px;width:34.4px;height:3px;background:#217346;"></div>
<div style="position:absolute;left:919.5px;top:47.4px;width:57.7px;height:22.8px;background:#fff;border:1px solid #e1dfdd;border-radius:3px;"></div>
<svg style="position:absolute;left:925px;top:52px;" width="16" height="16" viewBox="0 0 16 16"><path d="M2.5 5.5v7.5h9.5v-2.5" fill="none" stroke="#c8c6c4" stroke-width="1.1"/><path d="M5 10.5C5.5 7 8 5.5 12 5.5M10 2.5l3 3l-3 3" fill="none" stroke="#c8c6c4" stroke-width="1.1"/></svg>
<div style="position:absolute;left:943.80px;top:54.92px;font-size:11.44px;line-height:1;color:#b0aeac;white-space:nowrap;transform-origin:0 0;transform:scaleX(0.9538);font-weight:bold;">共有</div>
<div style="position:absolute;left:986.8px;top:47.4px;width:71.6px;height:22.8px;background:#fff;border:1px solid #e1dfdd;border-radius:3px;"></div>
<svg style="position:absolute;left:993px;top:53px;" width="14" height="12" viewBox="0 0 14 12"><path d="M2 1.5h10.5v7.5h-6.5l-3 2.5v-2.5h-1z" fill="none" stroke="#217346" stroke-width="1.2"/></svg>
<div style="position:absolute;left:1009.06px;top:54.10px;font-size:12.50px;line-height:1;color:#1a6b3c;white-space:nowrap;transform-origin:0 0;transform:scaleX(0.8191);font-weight:bold;">コメント</div>
<div style="position:absolute;left:227px;top:77px;width:1px;height:87px;background:#c8c6c4;"></div>
<div style="position:absolute;left:406px;top:77px;width:1px;height:87px;background:#c8c6c4;"></div>
<div style="position:absolute;left:527px;top:77px;width:1px;height:87px;background:#c8c6c4;"></div>
<div style="position:absolute;left:622px;top:77px;width:1px;height:87px;background:#c8c6c4;"></div>
<div style="position:absolute;left:788px;top:77px;width:1px;height:87px;background:#c8c6c4;"></div>
<div style="position:absolute;left:872px;top:77px;width:1px;height:87px;background:#c8c6c4;"></div>
<div style="position:absolute;left:960px;top:77px;width:1px;height:87px;background:#c8c6c4;"></div>
<div style="position:absolute;left:1017px;top:77px;width:1px;height:87px;background:#c8c6c4;"></div>
<div style="position:absolute;left:138.75px;top:153.60px;font-size:12.00px;line-height:1;color:#3b3a39;white-space:nowrap;transform-origin:0 0;transform:scaleX(0.7250);">クリップボード</div>
<div style="position:absolute;left:292.58px;top:152.00px;font-size:12.00px;line-height:1;color:#3b3a39;white-space:nowrap;transform-origin:0 0;transform:scaleX(0.7205);">フォント</div>
<div style="position:absolute;left:446.79px;top:154.00px;font-size:12.00px;line-height:1;color:#3b3a39;white-space:nowrap;transform-origin:0 0;transform:scaleX(1.0091);">配置</div>
<div style="position:absolute;left:555.00px;top:152.30px;font-size:12.00px;line-height:1;color:#3b3a39;white-space:nowrap;transform-origin:0 0;transform:scaleX(1.0348);">数値</div>
<div style="position:absolute;left:685.23px;top:153.00px;font-size:12.00px;line-height:1;color:#3b3a39;white-space:nowrap;transform-origin:0 0;transform:scaleX(0.7660);">スタイル</div>
<div style="position:absolute;left:820.19px;top:152.00px;font-size:12.00px;line-height:1;color:#3b3a39;white-space:nowrap;transform-origin:0 0;transform:scaleX(0.8087);">セル</div>
<div style="position:absolute;left:904.00px;top:153.30px;font-size:12.00px;line-height:1;color:#3b3a39;white-space:nowrap;transform-origin:0 0;transform:scaleX(1.0348);">編集</div>
<div style="position:absolute;left:970.81px;top:153.70px;font-size:12.00px;line-height:1;color:#3b3a39;white-space:nowrap;transform-origin:0 0;transform:scaleX(0.7913);">アイデア</div>
<svg style="position:absolute;left:215.6px;top:156px;" width="9" height="9" viewBox="0 0 9 9"><path d="M0.5 0.5h7.5M0.5 0.5v7.5" fill="none" stroke="#605e5c" stroke-width="1"/><path d="M2.5 2.5l5.5 5.5M4 8h4v-4" fill="none" stroke="#605e5c" stroke-width="1"/></svg>
<svg style="position:absolute;left:395.5px;top:156px;" width="9" height="9" viewBox="0 0 9 9"><path d="M0.5 0.5h7.5M0.5 0.5v7.5" fill="none" stroke="#605e5c" stroke-width="1"/><path d="M2.5 2.5l5.5 5.5M4 8h4v-4" fill="none" stroke="#605e5c" stroke-width="1"/></svg>
<svg style="position:absolute;left:516px;top:156px;" width="9" height="9" viewBox="0 0 9 9"><path d="M0.5 0.5h7.5M0.5 0.5v7.5" fill="none" stroke="#605e5c" stroke-width="1"/><path d="M2.5 2.5l5.5 5.5M4 8h4v-4" fill="none" stroke="#605e5c" stroke-width="1"/></svg>
<svg style="position:absolute;left:611px;top:156px;" width="9" height="9" viewBox="0 0 9 9"><path d="M0.5 0.5h7.5M0.5 0.5v7.5" fill="none" stroke="#605e5c" stroke-width="1"/><path d="M2.5 2.5l5.5 5.5M4 8h4v-4" fill="none" stroke="#605e5c" stroke-width="1"/></svg>
<svg style="position:absolute;left:1052px;top:158px;" width="11" height="7" viewBox="0 0 11 7"><path d="M1 6l4.5-4.5l4.5 4.5" fill="none" stroke="#3b3a39" stroke-width="1.2"/></svg>
<svg style="position:absolute;left:146px;top:80px;" width="32" height="32" viewBox="0 0 32 32"><rect x="2.7" y="5.6" width="19.4" height="22.4" fill="#dcdcdc" stroke="#a6a6a6" stroke-width="1.1"/><rect x="4.5" y="7.5" width="15.8" height="18.6" fill="#eeeeee"/><path d="M6.6 8.9V4.7H10.2C10.5 2.5 11.5 1.5 12.5 1.5S14.5 2.5 14.8 4.7H18.2V8.9Z" fill="#efefef" stroke="#a6a6a6" stroke-width="1.1"/><rect x="14.8" y="12.4" width="14.4" height="18.6" fill="#f3f2f1"/><rect x="15.6" y="13.4" width="12.8" height="16.7" fill="#eeeeee" stroke="#9a9a9a" stroke-width="1.3"/></svg>
<svg style="position:absolute;left:186px;top:79px;" width="14" height="18" viewBox="0 0 14 18"><path d="M3.5 1l5 12M10.5 1l-5 12" stroke="#464646" stroke-width="1.1"/><circle cx="3.5" cy="14.5" r="1.9" fill="none" stroke="#2b88d8" stroke-width="1.4"/><circle cx="10.5" cy="14.5" r="1.9" fill="none" stroke="#2b88d8" stroke-width="1.4"/></svg>
<svg style="position:absolute;left:185px;top:103px;" width="18" height="18" viewBox="0 0 18 18"><path d="M4.5 1h-3.5v13h3" fill="none" stroke="#323130" stroke-width="1.2"/><path d="M5.5 3.5h7l3.5 3.5v10h-10.5z" fill="#fff" stroke="#323130" stroke-width="1.3"/><path d="M12.5 3.5v3.5h3.5" fill="none" stroke="#323130" stroke-width="1"/><path d="M8 10.5h5.5M8 13h5.5" stroke="#323130" stroke-width="1"/></svg>
<svg style="position:absolute;left:206.5px;top:110px;" width="8" height="5" viewBox="0 0 8 5"><path d="M1 1l3 3l3-3" fill="none" stroke="#3b3a39" stroke-width="1.1"/></svg>
<svg style="position:absolute;left:183px;top:125px;" width="20" height="20" viewBox="0 0 20 20"><path d="M3.2 9.5L9 6.5L14.5 12.5L8.7 17.5z" fill="#fff" stroke="#e8821e" stroke-width="1.3" stroke-linejoin="round"/><path d="M5.5 12.5L12.5 14.5L8.7 17.2z" fill="#f7c46c"/><path d="M8.3 6.2l3.5-2.2l5 5l-2.2 3.5z" fill="#fff" stroke="#323130" stroke-width="1.2" stroke-linejoin="round"/><path d="M13.5 6.5l4-4a1 1 0 0 1 1.5 1.5l-4 4" fill="#fff" stroke="#323130" stroke-width="1.2"/></svg>
<div style="position:absolute;left:137.28px;top:116.40px;font-size:12.00px;line-height:1;color:#a19f9d;white-space:nowrap;transform-origin:0 0;transform:scaleX(0.9244);">貼り付け</div>
<svg style="position:absolute;left:157px;top:134.5px;" width="8" height="5" viewBox="0 0 8 5"><path d="M1 1l3 3l3-3" fill="none" stroke="#a6a6a6" stroke-width="1.1"/></svg>
<div style="position:absolute;left:236.3px;top:77.5px;width:123px;height:22.2px;background:#fff;border:1px solid #c8c6c4;"></div>
<div style="position:absolute;left:360.3px;top:77.5px;width:38.4px;height:22.2px;background:#fff;border:1px solid #c8c6c4;"></div>
<div style="position:absolute;left:239.00px;top:83.00px;font-size:12.00px;line-height:1;color:#262626;white-space:nowrap;transform-origin:0 0;transform:scaleX(0.7759);">游ゴシック</div>
<svg style="position:absolute;left:349.5px;top:86.5px;" width="8" height="5" viewBox="0 0 8 5"><path d="M1 1l3 3l3-3" fill="none" stroke="#3b3a39" stroke-width="1.1"/></svg>
<div style="position:absolute;left:361.13px;top:82.20px;font-size:13.00px;line-height:1;color:#262626;white-space:nowrap;transform-origin:0 0;transform:scaleX(1.0667);">11</div>
<svg style="position:absolute;left:389px;top:86.5px;" width="8" height="5" viewBox="0 0 8 5"><path d="M1 1l3 3l3-3" fill="none" stroke="#3b3a39" stroke-width="1.1"/></svg>
<div style="position:absolute;left:242.97px;top:104.25px;font-size:13.00px;line-height:1;color:#323130;white-space:nowrap;transform-origin:0 0;transform:scaleX(0.7812);font-weight:bold;">B</div>
<svg style="position:absolute;left:264px;top:105px;" width="9" height="12" viewBox="0 0 9 12"><path d="M3 1.2h5.5M0.5 10.8h5.5M5.8 1.2l-3 9.6" fill="none" stroke="#323130" stroke-width="1.1"/></svg>
<svg style="position:absolute;left:284px;top:105px;" width="12" height="14" viewBox="0 0 12 14"><path d="M2 1v5.5c0 2.5 1.5 4 4 4s4-1.5 4-4v-5.5" fill="none" stroke="#323130" stroke-width="1.1"/><path d="M1 13h10" stroke="#323130" stroke-width="1.1"/></svg>
<svg style="position:absolute;left:303px;top:110px;" width="8" height="5" viewBox="0 0 8 5"><path d="M1 1l3 3l3-3" fill="none" stroke="#3b3a39" stroke-width="1.1"/></svg>
<div style="position:absolute;left:319.5px;top:102px;width:1px;height:20.5px;background:#c8c6c4;"></div>
<svg style="position:absolute;left:327px;top:103px;" width="18" height="15" viewBox="0 0 18 15"><path d="M1 14l5.5-13l5.5 13M3.2 9.5h6.6" fill="none" stroke="#323130" stroke-width="1.2"/><path d="M11.5 5l2.5-2.5l2.5 2.5" fill="none" stroke="#2b88d8" stroke-width="1.2"/></svg>
<svg style="position:absolute;left:351px;top:104px;" width="15" height="14" viewBox="0 0 15 14"><path d="M1 13l4.5-10l4.5 10M2.8 9.5h5.4" fill="none" stroke="#323130" stroke-width="1.2"/><path d="M9.5 1.5l2.3 2.3l2.3-2.3" fill="none" stroke="#2b88d8" stroke-width="1.2"/></svg>
<svg style="position:absolute;left:238px;top:127px;" width="16" height="17" viewBox="0 0 16 17"><path d="M1.2 1.5h13.5M1.2 1.5v12M14.7 1.5v12M1.2 7.5h13.5M8 1.5v12" fill="none" stroke="#323130" stroke-width="0.9" stroke-dasharray="1.3 1.3"/><path d="M0.5 15.3h15" stroke="#111" stroke-width="1.4"/></svg>
<svg style="position:absolute;left:260px;top:134.5px;" width="8" height="5" viewBox="0 0 8 5"><path d="M1 1l3 3l3-3" fill="none" stroke="#3b3a39" stroke-width="1.1"/></svg>
<div style="position:absolute;left:276.5px;top:126px;width:1px;height:20.7px;background:#c8c6c4;"></div>
<svg style="position:absolute;left:282px;top:125px;" width="20" height="15" viewBox="0 0 20 15"><path d="M4.7 9.7L10 4.7L14 8.2L9 13.7z" fill="#fff" stroke="#262626" stroke-width="1.2" stroke-linejoin="round"/><path d="M10 6.5V3.5a1 1 0 0 1 2 0V8.5" fill="none" stroke="#262626" stroke-width="1.1"/><path d="M14 7c1.5-0.3 2.2 1.5 2 5" fill="none" stroke="#1e6fc2" stroke-width="1.7" stroke-linecap="round"/></svg>
<div style="position:absolute;left:283.8px;top:139.8px;width:16.4px;height:4.2px;background:#ffff00;"></div>
<svg style="position:absolute;left:305.5px;top:134.5px;" width="8" height="5" viewBox="0 0 8 5"><path d="M1 1l3 3l3-3" fill="none" stroke="#3b3a39" stroke-width="1.1"/></svg>
<div style="position:absolute;left:323.75px;top:126.00px;font-size:13.50px;line-height:1;color:#323130;white-space:nowrap;transform-origin:0 0;transform:scaleX(1.0278);">A</div>
<div style="position:absolute;left:320px;top:140px;width:16px;height:3.7px;background:#ff0000;"></div>
<svg style="position:absolute;left:342.5px;top:134.5px;" width="8" height="5" viewBox="0 0 8 5"><path d="M1 1l3 3l3-3" fill="none" stroke="#3b3a39" stroke-width="1.1"/></svg>
<div style="position:absolute;left:358.3px;top:126px;width:1px;height:20.7px;background:#c8c6c4;"></div>
<svg style="position:absolute;left:368px;top:127px;" width="10" height="18" viewBox="0 0 10 18"><path d="M2 1.5h6l-2 2M4.5 3.5c0 2-0.5 3.5-2 5" fill="none" stroke="#8a8886" stroke-width="1"/><path d="M1 10.5h8M2 13h6M2 14.7h6M1 16.6h8" stroke="#8a8886" stroke-width="1.1"/></svg>
<svg style="position:absolute;left:387.5px;top:134.5px;" width="8" height="5" viewBox="0 0 8 5"><path d="M1 1l3 3l3-3" fill="none" stroke="#3b3a39" stroke-width="1.1"/></svg>
<div style="position:absolute;left:436px;top:77px;width:22px;height:22.8px;background:#c8c8c8;"></div>
<svg style="position:absolute;left:418px;top:78px;" width="16" height="16" viewBox="0 0 16 16"><path d="M1 3.0h13" stroke="#323130" stroke-width="1.1"/><path d="M2.5 7.0h9.5" stroke="#323130" stroke-width="1.1"/><path d="M1 11.0h13" stroke="#323130" stroke-width="1.1"/></svg>
<svg style="position:absolute;left:439px;top:81px;" width="16" height="16" viewBox="0 0 16 16"><path d="M1 3.0h14" stroke="#323130" stroke-width="1.1"/><path d="M3 7.0h10" stroke="#323130" stroke-width="1.1"/><path d="M1 11.0h14" stroke="#323130" stroke-width="1.1"/></svg>
<svg style="position:absolute;left:461px;top:85px;" width="16" height="16" viewBox="0 0 16 16"><path d="M1 2.0h14" stroke="#323130" stroke-width="1.1"/><path d="M3 6.2h10" stroke="#323130" stroke-width="1.1"/><path d="M1 10.5h14" stroke="#323130" stroke-width="1.1"/></svg>
<svg style="position:absolute;left:485px;top:79px;" width="20" height="20" viewBox="0 0 20 20"><text x="2" y="9.3" font-size="10.5" fill="#323130" font-family="Liberation Sans">ab</text><text x="2" y="16.5" font-size="10.5" fill="#323130" font-family="Liberation Sans">c</text><path d="M15.5 9.5c1 2.5-0.5 5-4 5.3h-2.5M11 12l-2.5 2.8l2.5 2.8" fill="none" stroke="#2b88d8" stroke-width="1.3"/></svg>
<svg style="position:absolute;left:418px;top:104px;" width="16" height="16" viewBox="0 0 16 16"><path d="M1 1.5h13" stroke="#323130" stroke-width="1.1"/><path d="M1 5.5h9" stroke="#323130" stroke-width="1.1"/><path d="M1 9.5h13" stroke="#323130" stroke-width="1.1"/><path d="M1 13.5h9" stroke="#323130" stroke-width="1.1"/></svg>
<svg style="position:absolute;left:439px;top:104px;" width="16" height="16" viewBox="0 0 16 16"><path d="M1 1.5h14" stroke="#323130" stroke-width="1.1"/><path d="M3 5.5h10" stroke="#323130" stroke-width="1.1"/><path d="M1 9.5h14" stroke="#323130" stroke-width="1.1"/><path d="M3 13.5h10" stroke="#323130" stroke-width="1.1"/></svg>
<svg style="position:absolute;left:461px;top:104px;" width="16" height="16" viewBox="0 0 16 16"><path d="M1 1.5h14" stroke="#323130" stroke-width="1.1"/><path d="M5 5.5h10" stroke="#323130" stroke-width="1.1"/><path d="M1 9.5h14" stroke="#323130" stroke-width="1.1"/><path d="M5 13.5h10" stroke="#323130" stroke-width="1.1"/></svg>
<svg style="position:absolute;left:484px;top:103px;" width="17" height="17" viewBox="0 0 17 17"><rect x="1.5" y="1.5" width="14" height="14" fill="none" stroke="#323130" stroke-width="1.1"/><path d="M8.5 1.5v2.5M8.5 13v2.5" stroke="#323130" stroke-width="1.1"/><rect x="1.5" y="4.5" width="14" height="8" fill="none" stroke="#2b88d8" stroke-width="1.1"/><path d="M4 8.5h9M5.5 7l-1.5 1.5l1.5 1.5M11.5 7l1.5 1.5l-1.5 1.5" fill="none" stroke="#2b88d8" stroke-width="1.1"/></svg>
<svg style="position:absolute;left:506.5px;top:110px;" width="8" height="5" viewBox="0 0 8 5"><path d="M1 1l3 3l3-3" fill="none" stroke="#3b3a39" stroke-width="1.1"/></svg>
<svg style="position:absolute;left:418px;top:128px;" width="16" height="15" viewBox="0 0 16 15"><path d="M1 1.5h13M7 5.5h7M7 9.5h7M1 13.5h13" stroke="#323130" stroke-width="1.1"/><path d="M6 7.5h-4.5M3.5 5.5l-2 2l2 2" fill="none" stroke="#2b88d8" stroke-width="1.2"/></svg>
<svg style="position:absolute;left:439px;top:128px;" width="16" height="15" viewBox="0 0 16 15"><path d="M1 1.5h14M8 5.5h7M8 9.5h7M1 13.5h14" stroke="#323130" stroke-width="1.1"/><path d="M1.5 7.5h4.5M4 5.5l2 2l-2 2" fill="none" stroke="#2b88d8" stroke-width="1.2"/></svg>
<div style="position:absolute;left:462.5px;top:126px;width:1px;height:21px;background:#c8c6c4;"></div>
<svg style="position:absolute;left:468px;top:126px;" width="20" height="20" viewBox="0 0 20 20"><text x="0" y="0" font-size="10.5" fill="#323130" font-family="Liberation Sans" transform="translate(5.5 14.5) rotate(-45)">ab</text><path d="M6 17l9.5-9.5M11.5 7.5h4v4" fill="none" stroke="#2b88d8" stroke-width="1.2"/></svg>
<svg style="position:absolute;left:488.5px;top:134.5px;" width="8" height="5" viewBox="0 0 8 5"><path d="M1 1l3 3l3-3" fill="none" stroke="#3b3a39" stroke-width="1.1"/></svg>
<div style="position:absolute;left:536px;top:77.2px;width:78.7px;height:22.1px;background:#fff;border:1px solid #c8c6c4;"></div>
<div style="position:absolute;left:539.00px;top:83.30px;font-size:12.00px;line-height:1;color:#262626;white-space:nowrap;transform-origin:0 0;transform:scaleX(0.9739);">標準</div>
<svg style="position:absolute;left:604.5px;top:87.5px;" width="8" height="5" viewBox="0 0 8 5"><path d="M1 1l3 3l3-3" fill="none" stroke="#3b3a39" stroke-width="1.1"/></svg>
<svg style="position:absolute;left:538px;top:106px;" width="18" height="15" viewBox="0 0 18 15"><rect x="1.5" y="1.5" width="14" height="9" fill="none" stroke="#323130" stroke-width="1.1"/><path d="M5 4h-1.2v4h1.2M12 4h1.2v4h-1.2" fill="none" stroke="#323130" stroke-width="0.9"/><path d="M7 4.5a1.5 1.5 0 0 1 3 0" fill="none" stroke="#323130" stroke-width="0.9"/><rect x="8" y="5.5" width="8" height="8.3" rx="2" fill="#f3f2f1" stroke="#e8821e" stroke-width="1.3"/><path d="M8.5 8.3h7M8.5 11h7" stroke="#e8821e" stroke-width="1"/></svg>
<svg style="position:absolute;left:559.5px;top:110.5px;" width="8" height="5" viewBox="0 0 8 5"><path d="M1 1l3 3l3-3" fill="none" stroke="#3b3a39" stroke-width="1.1"/></svg>
<div style="position:absolute;left:574.77px;top:102.80px;font-size:17.00px;line-height:1;color:#323130;white-space:nowrap;transform-origin:0 0;transform:scaleX(1.0286);font-weight:normal;">%</div>
<svg style="position:absolute;left:599px;top:105px;" width="11" height="15" viewBox="0 0 11 15"><circle cx="6" cy="4.5" r="3.3" fill="#323130"/><path d="M9 5c0.5 4-2 7.5-6 8.8" fill="none" stroke="#323130" stroke-width="2"/></svg>
<svg style="position:absolute;left:537px;top:127px;" width="20" height="17" viewBox="0 0 20 17"><path d="M10 5.5h-8M4.5 3l-2.5 2.5l2.5 2.5" fill="none" stroke="#2b88d8" stroke-width="1.2"/><text x="9" y="8" font-size="8.8" fill="#323130" font-family="Liberation Sans">.0</text><text x="3" y="16" font-size="8.8" fill="#323130" font-family="Liberation Sans">.00</text></svg>
<svg style="position:absolute;left:559px;top:127px;" width="20" height="17" viewBox="0 0 20 17"><text x="3.5" y="8" font-size="8.8" fill="#323130" font-family="Liberation Sans">.00</text><path d="M1.5 12.2h8M7 9.7l2.5 2.5l-2.5 2.5" fill="none" stroke="#2b88d8" stroke-width="1.2"/><text x="8.5" y="16" font-size="8.8" fill="#323130" font-family="Liberation Sans">.0</text></svg>
<svg style="position:absolute;left:633px;top:79px;" width="18" height="16" viewBox="0 0 18 16"><rect x="1.5" y="1.5" width="15" height="13" fill="none" stroke="#323130" stroke-width="1.1"/><path d="M6 1.5v13M11.5 1.5v13M1.5 5.8h15M1.5 10.2h15" stroke="#8a8886" stroke-width="0.9"/><rect x="4.5" y="1.5" width="6" height="4" fill="#f4a9b5" stroke="#e81123" stroke-width="1"/><rect x="4.5" y="10" width="7.5" height="4.5" fill="#f4a9b5" stroke="#e81123" stroke-width="1"/><path d="M4.5 5.5v4.5" stroke="#2b88d8" stroke-width="2"/></svg>
<div style="position:absolute;left:652.90px;top:82.00px;font-size:12.20px;line-height:1;color:#323130;white-space:nowrap;transform-origin:0 0;transform:scaleX(0.9319);">条件付き書式</div>
<svg style="position:absolute;left:724px;top:86px;" width="8" height="5" viewBox="0 0 8 5"><path d="M1 1l3 3l3-3" fill="none" stroke="#3b3a39" stroke-width="1.1"/></svg>
<svg style="position:absolute;left:633px;top:102px;" width="18" height="17" viewBox="0 0 18 17"><path d="M1.5 15v-13.5h15v5" fill="none" stroke="#323130" stroke-width="1.1"/><path d="M1.5 6h15M6 1.5v13M11.5 1.5v5M1.5 10.5h4" stroke="#8a8886" stroke-width="0.9"/><rect x="6.5" y="6.5" width="10" height="9" fill="#9fcdf2" stroke="#2b88d8" stroke-width="1"/><path d="M7 15l8-8" stroke="#323130" stroke-width="2.2"/><path d="M7.2 14.8l7.6-7.6" stroke="#fff" stroke-width="0.8"/><path d="M4 16c1 0 2.5 0 3.5-1.5" stroke="#2b88d8" stroke-width="1.5" fill="none"/></svg>
<div style="position:absolute;left:651.66px;top:105.00px;font-size:12.20px;line-height:1;color:#323130;white-space:nowrap;transform-origin:0 0;transform:scaleX(0.8423);">テーブルとして書式設定</div>
<svg style="position:absolute;left:766.5px;top:109.5px;" width="8" height="5" viewBox="0 0 8 5"><path d="M1 1l3 3l3-3" fill="none" stroke="#3b3a39" stroke-width="1.1"/></svg>
<svg style="position:absolute;left:633px;top:124px;" width="18" height="17" viewBox="0 0 18 17"><rect x="1.5" y="1.5" width="15" height="13" fill="none" stroke="#323130" stroke-width="1.1"/><rect x="4" y="4" width="12" height="10" fill="#9fcdf2"/><path d="M7 15l8-8" stroke="#323130" stroke-width="2.2"/><path d="M7.2 14.8l7.6-7.6" stroke="#fff" stroke-width="0.8"/><path d="M4 16c1 0 2.5 0 3.5-1.5" stroke="#2b88d8" stroke-width="1.5" fill="none"/></svg>
<div style="position:absolute;left:651.72px;top:127.75px;font-size:12.20px;line-height:1;color:#323130;white-space:nowrap;transform-origin:0 0;transform:scaleX(0.7771);">セルのスタイル</div>
<svg style="position:absolute;left:720.5px;top:132.5px;" width="8" height="5" viewBox="0 0 8 5"><path d="M1 1l3 3l3-3" fill="none" stroke="#3b3a39" stroke-width="1.1"/></svg>
<svg style="position:absolute;left:799px;top:79px;" width="18" height="16" viewBox="0 0 18 16"><rect x="1.5" y="1.5" width="15" height="13" fill="none" stroke="#323130" stroke-width="1.1"/><path d="M1.5 5.8h15M1.5 10.2h15M6.5 1.5v13M11.5 1.5v13" stroke="#8a8886" stroke-width="0.9"/><rect x="10" y="5.8" width="6.5" height="4.4" fill="#9fcdf2" stroke="#1e78d0" stroke-width="1"/><path d="M10 8h-8M4.8 5.2l-2.8 2.8l2.8 2.8" fill="none" stroke="#1e78d0" stroke-width="1.3"/></svg>
<div style="position:absolute;left:819.00px;top:82.70px;font-size:12.00px;line-height:1;color:#323130;white-space:nowrap;transform-origin:0 0;transform:scaleX(0.9652);">挿入</div>
<svg style="position:absolute;left:851.2px;top:85.2px;" width="8" height="5" viewBox="0 0 8 5"><path d="M1 1l3 3l3-3" fill="none" stroke="#3b3a39" stroke-width="1.1"/></svg>
<svg style="position:absolute;left:799px;top:102px;" width="18" height="16" viewBox="0 0 18 16"><path d="M1.5 1.5h15M1.5 14.5h15M1.5 1.5v13M16.5 1.5v3M16.5 11.5v3" fill="none" stroke="#323130" stroke-width="1.1"/><path d="M1.5 5.8h15M1.5 10.2h15M6.5 1.5v13M11.5 1.5v3M11.5 11v3" stroke="#8a8886" stroke-width="0.9"/><rect x="5" y="5.8" width="5.5" height="4.4" fill="#9fcdf2" stroke="#2b88d8" stroke-width="0.9"/><path d="M11.5 5.5l4.5 4.5M16 5.5l-4.5 4.5" stroke="#e81123" stroke-width="1.1"/></svg>
<div style="position:absolute;left:819.00px;top:104.50px;font-size:12.00px;line-height:1;color:#323130;white-space:nowrap;transform-origin:0 0;transform:scaleX(0.9652);">削除</div>
<svg style="position:absolute;left:851.2px;top:108.2px;" width="8" height="5" viewBox="0 0 8 5"><path d="M1 1l3 3l3-3" fill="none" stroke="#3b3a39" stroke-width="1.1"/></svg>
<svg style="position:absolute;left:799px;top:123px;" width="18" height="18" viewBox="0 0 18 18"><rect x="1.5" y="3.5" width="15" height="13" fill="none" stroke="#323130" stroke-width="1.1"/><path d="M1.5 7.8h15M1.5 12.2h15M6.5 3.5v13M11.5 3.5v13" stroke="#8a8886" stroke-width="0.9"/><rect x="4" y="6.5" width="10" height="7" fill="#9fcdf2" stroke="#2b88d8" stroke-width="0.9"/><path d="M3.5 1.2h11M3.5 0v2.5M14.5 0v2.5" stroke="#2b88d8" stroke-width="1"/></svg>
<div style="position:absolute;left:818.23px;top:128.70px;font-size:12.00px;line-height:1;color:#323130;white-space:nowrap;transform-origin:0 0;transform:scaleX(0.9652);">書式</div>
<svg style="position:absolute;left:846px;top:131.5px;" width="8" height="5" viewBox="0 0 8 5"><path d="M1 1l3 3l3-3" fill="none" stroke="#3b3a39" stroke-width="1.1"/></svg>
<svg style="position:absolute;left:884px;top:79px;" width="15" height="16" viewBox="0 0 15 16"><path d="M13 2.5v-1h-11.5l6 6.5l-6 6.5h11.5v-1" fill="none" stroke="#323130" stroke-width="1.1"/></svg>
<svg style="position:absolute;left:905px;top:86px;" width="8" height="5" viewBox="0 0 8 5"><path d="M1 1l3 3l3-3" fill="none" stroke="#3b3a39" stroke-width="1.1"/></svg>
<svg style="position:absolute;left:920px;top:78px;" width="18" height="17" viewBox="0 0 18 17"><text x="1" y="8" font-size="8.5" font-weight="bold" fill="#2b88d8" font-family="Liberation Sans">A</text><text x="1" y="16" font-size="8.5" font-weight="bold" fill="#323130" font-family="Liberation Sans">Z</text><path d="M8 5.5h8l-3 4v4l-2 1v-5z" fill="none" stroke="#323130" stroke-width="1.1"/></svg>
<svg style="position:absolute;left:941.5px;top:86px;" width="8" height="5" viewBox="0 0 8 5"><path d="M1 1l3 3l3-3" fill="none" stroke="#3b3a39" stroke-width="1.1"/></svg>
<svg style="position:absolute;left:883px;top:102px;" width="17" height="16" viewBox="0 0 17 16"><rect x="1.5" y="1.5" width="14" height="13.5" fill="none" stroke="#323130" stroke-width="1.1"/><path d="M1.5 3.8h14" stroke="#323130" stroke-width="1.1"/><path d="M8.5 5.5v7M6 10l2.5 2.5l2.5-2.5" fill="none" stroke="#2b88d8" stroke-width="1.2"/></svg>
<svg style="position:absolute;left:904px;top:109px;" width="8" height="5" viewBox="0 0 8 5"><path d="M1 1l3 3l3-3" fill="none" stroke="#3b3a39" stroke-width="1.1"/></svg>
<svg style="position:absolute;left:920px;top:101px;" width="18" height="17" viewBox="0 0 18 17"><circle cx="10.5" cy="6.5" r="5" fill="none" stroke="#323130" stroke-width="1.1"/><path d="M7 10l-5.5 5.5" stroke="#323130" stroke-width="1.2"/></svg>
<svg style="position:absolute;left:941.5px;top:109px;" width="8" height="5" viewBox="0 0 8 5"><path d="M1 1l3 3l3-3" fill="none" stroke="#3b3a39" stroke-width="1.1"/></svg>
<svg style="position:absolute;left:883px;top:124px;" width="17" height="17" viewBox="0 0 17 17"><path d="M1.5 9.5l7-7.5l6.5 6.5l-7 7.5z" fill="#fff" stroke="#a349a4" stroke-width="1.2"/><path d="M1.5 9.5l3-3.2l6.5 6.5l-3 3.2z" fill="#c26ec7" stroke="#a349a4" stroke-width="1.2"/></svg>
<svg style="position:absolute;left:904px;top:132px;" width="8" height="5" viewBox="0 0 8 5"><path d="M1 1l3 3l3-3" fill="none" stroke="#3b3a39" stroke-width="1.1"/></svg>
<svg style="position:absolute;left:977px;top:79px;" width="26" height="32" viewBox="0 0 26 32"><path d="M12.7 2.3H21.7L14.5 14.1H23.5L7.9 29.7H4L10.9 18.3H2.5z" fill="#8cc4f2" stroke="#1b6ec2" stroke-width="1.3" stroke-linejoin="miter"/></svg>
<div style="position:absolute;left:980.19px;top:115.70px;font-size:12.00px;line-height:1;color:#323130;white-space:nowrap;transform-origin:0 0;transform:scaleX(0.8095);">アイ</div>
<div style="position:absolute;left:978.60px;top:129.00px;font-size:12.00px;line-height:1;color:#323130;white-space:nowrap;transform-origin:0 0;transform:scaleX(0.9000);">デア</div>
<div style="position:absolute;left:133px;top:179px;width:101px;height:31px;background:#fff;border:1px solid #c6c6c6;"></div>
<div style="position:absolute;left:140.80px;top:188.00px;font-size:15.00px;line-height:1;color:#262626;white-space:nowrap;transform-origin:0 0;transform:scaleX(0.8400);">A</div>
<div style="position:absolute;left:151.06px;top:188.00px;font-size:15.00px;line-height:1;color:#262626;white-space:nowrap;transform-origin:0 0;transform:scaleX(0.7429);">1</div>
<div style="position:absolute;left:159.03px;top:188.00px;font-size:15.00px;line-height:1;color:#262626;white-space:nowrap;transform-origin:0 0;transform:scaleX(0.7714);">1</div>
<svg style="position:absolute;left:219px;top:191px;" width="10" height="6" viewBox="0 0 10 6"><path d="M0.8 0.8h7.6l-3.8 4.2z" fill="#6d6d6d"/></svg>
<div style="position:absolute;left:247px;top:188.5px;width:2px;height:2px;background:#9b9b9b;"></div>
<div style="position:absolute;left:247px;top:193px;width:2px;height:2px;background:#9b9b9b;"></div>
<div style="position:absolute;left:247px;top:197.5px;width:2px;height:2px;background:#9b9b9b;"></div>
<div style="position:absolute;left:263px;top:179px;width:108px;height:31px;background:#fff;border:1px solid #c6c6c6;"></div>
<svg style="position:absolute;left:275px;top:188px;" width="14" height="12" viewBox="0 0 14 12"><path d="M2 1.3l9.5 9.5M11.5 1.3l-9.5 9.5" stroke="#bdbdbd" stroke-width="1.2"/></svg>
<svg style="position:absolute;left:309px;top:188px;" width="17" height="13" viewBox="0 0 17 13"><path d="M2 6.5l4 4.5l9-9.5" fill="none" stroke="#c6c6c6" stroke-width="2"/></svg>
<svg style="position:absolute;left:345px;top:186px;" width="16" height="16" viewBox="0 0 16 16"><text x="2" y="12.5" font-size="13" font-style="italic" font-weight="bold" fill="#5a5a5a" font-family="Liberation Serif">f</text><text x="7" y="12.5" font-size="10" font-style="italic" font-weight="bold" fill="#5a5a5a" font-family="Liberation Serif">x</text></svg>
<div style="position:absolute;left:374px;top:179px;width:692px;height:31px;background:#fff;border:1px solid #c6c6c6;"></div>
<svg style="position:absolute;left:1053px;top:191px;" width="10" height="7" viewBox="0 0 10 7"><path d="M1.3 1.3l3.7 3.7l3.7-3.7" fill="none" stroke="#5f5f5f" stroke-width="2"/></svg>
<div style="position:absolute;left:128px;top:44px;width:1px;height:546px;background:#6fa587;"></div>
<div style="position:absolute;left:1071px;top:44px;width:1px;height:546px;background:#2f7d52;"></div>
</body></html>
